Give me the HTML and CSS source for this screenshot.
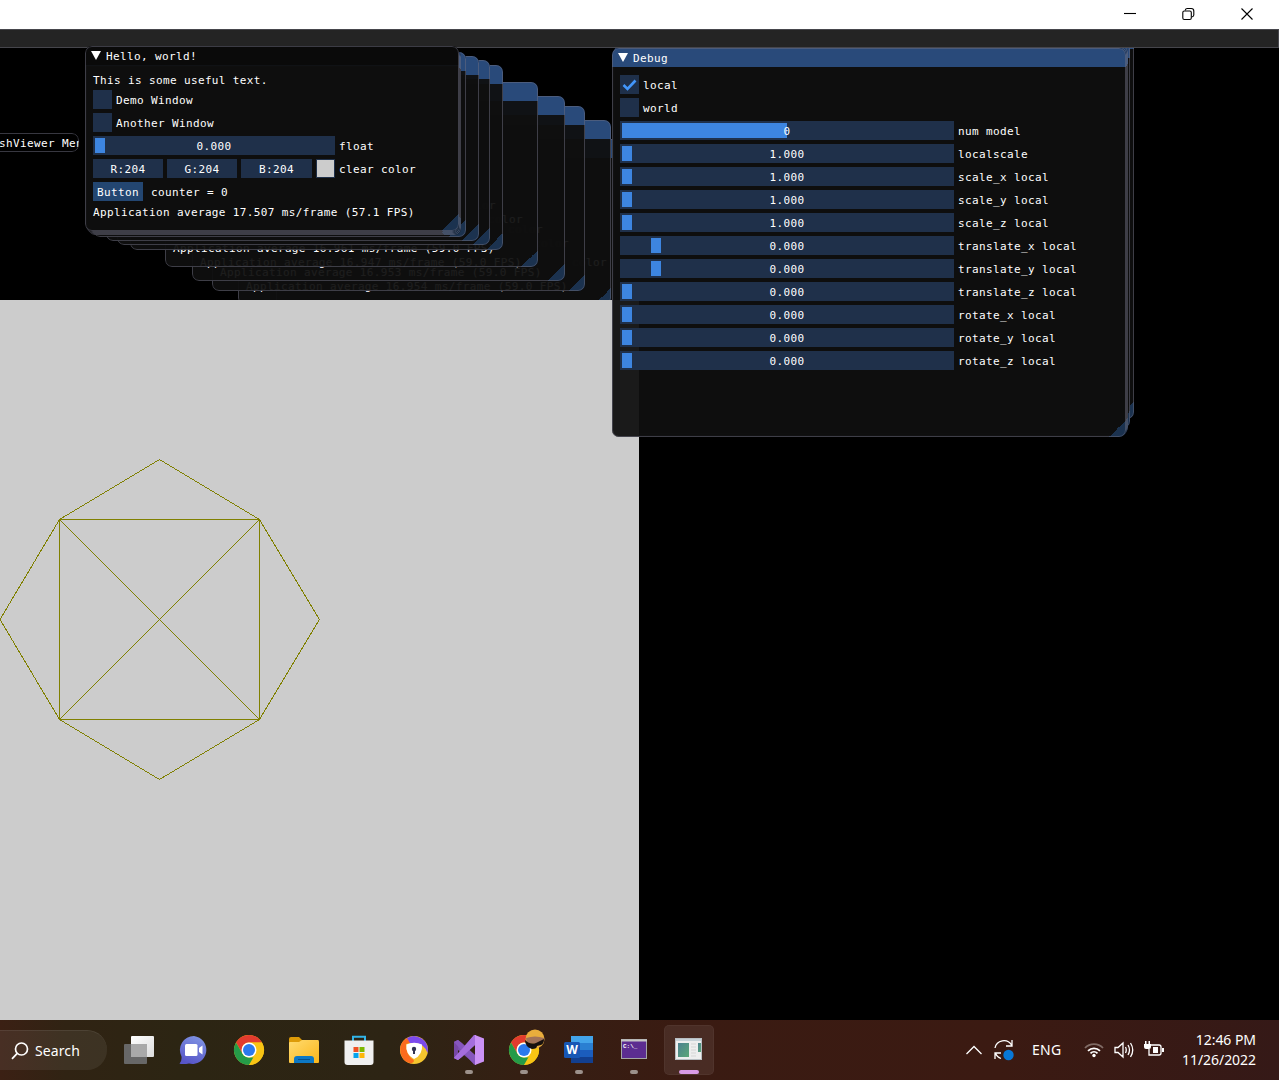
FILE: index.html
```html
<!DOCTYPE html>
<html lang="en">
<head>
<meta charset="utf-8">
<title>MeshViewer</title>
<link rel="stylesheet" href="styles.css">
</head>
<body>
<div class="screen">
  <header class="titlebar">
    <svg class="caption" viewBox="0 0 14 14"><path d="M1 6.500H13"/></svg>
    <svg class="caption" viewBox="0 0 14 14"><rect x=".8" y="4" width="8.500" height="8.500" rx="1.500"/><path d="M3.300 3.500V3.200Q3.600 1.500 5.300 1.500H9.300Q11.800 1.500 11.800 4V8Q11.800 9.500 9.800 10"/></svg>
    <svg class="caption" viewBox="0 0 14 14"><path d="M1.500 1.500L12.500 12.500M12.500 1.500L1.500 12.500"/></svg>
  </header>
  <div class="menubar"></div>

  <main class="desktop">
    <section class="win collapsed"><div class="title">MeshViewer Menu</div></section>

    <section class="win trail" style="left:276px;top:91px"><div class="title"></div><div class="body"><div class="row tint">clear color</div></div></section>
    <section class="win trail" style="left:238px;top:72px"><div class="title"></div><div class="body"><div class="row tint">clear color</div><div class="line stat">Application average 16.954 ms/frame (59.0 FPS)</div></div><i class="grip"></i></section>
    <section class="win trail" style="left:212px;top:58px"><div class="title"></div><div class="body"><div class="row tint">clear color</div><div class="line stat">Application average 16.953 ms/frame (59.0 FPS)</div></div><i class="grip"></i></section>
    <section class="win trail" style="left:192px;top:48px"><div class="title"></div><div class="body"><div class="row tint">clear color</div><div class="line stat">Application average 16.947 ms/frame (59.0 FPS)</div></div><i class="grip"></i></section>
    <section class="win trail" style="left:165px;top:34px"><div class="title"></div><div class="body"><div class="row tint">clear color</div><div class="line stat">Application average 16.961 ms/frame (59.0 FPS)</div></div><i class="grip"></i></section>
    <section class="win trail" style="left:130px;top:17px"><div class="title"></div><i class="grip"></i></section>
    <section class="win trail" style="left:117px;top:12px"><div class="title"></div><i class="grip"></i></section>
    <section class="win trail" style="left:106px;top:8px"><div class="title"></div><i class="grip"></i></section>
    <section class="win trail" style="left:93px;top:4px"><div class="title"></div><i class="grip"></i></section>
    <section class="win trail" style="left:88px;top:2px"><div class="title"></div><i class="grip"></i></section>
    <section class="win trail" style="left:87px;top:1px"><div class="title"></div><i class="grip"></i></section>
    <section class="win trail" style="left:86px;top:0px"><div class="title"></div><i class="grip"></i></section>
    <section class="win trail" style="left:86px;top:-1px"><div class="title"></div><i class="grip"></i></section>

    <section class="win debug-trail" style="left:620px;top:-18px"><div class="title"></div><i class="grip"></i></section>
    <section class="win debug-trail" style="left:616px;top:-9px"><div class="title"></div><i class="grip"></i></section>
    <section class="win debug-trail" style="left:614px;top:-3px"><div class="title"></div><i class="grip"></i></section>
    <section class="win debug-trail" style="left:613px;top:-1px"><div class="title"></div><i class="grip"></i></section>

    <svg class="viewport" viewBox="0 0 639 720">
      <path d="M159.500 159.500L259.500 219.500L319.500 319.500L259.500 419.500L159.500 479.500L59.500 419.500L0 319.500L59.500 219.500ZM59.500 219.500H259.500V419.500H59.500ZM59.500 219.500L259.500 419.500M259.500 219.500L59.500 419.500"/>
    </svg>

    <section class="win hello">
      <div class="title"><i class="arrow"></i>Hello, world!</div>
      <div class="body">
        <div class="line">This is some useful text.</div>
        <div class="row"><i class="box"></i>Demo Window</div>
        <div class="row"><i class="box"></i>Another Window</div>
        <div class="row"><div class="slider"><i class="grab"></i>0.000</div>float</div>
        <div class="row"><div class="field">R:204</div><div class="field">G:204</div><div class="field wide">B:204</div><i class="swatch"></i>clear color</div>
        <div class="row spaced"><div class="button">Button</div>counter = 0</div>
        <div class="line">Application average 17.507 ms/frame (57.1 FPS)</div>
      </div>
      <i class="grip"></i>
    </section>

    <section class="win debug">
      <div class="title"><i class="arrow"></i>Debug</div>
      <div class="body">
        <div class="row"><i class="box"><svg viewBox="0 0 19 19"><path d="M3.500 10L7.500 14L15.500 5.500"/></svg></i>local</div>
        <div class="row"><i class="box"></i>world</div>
        <div class="row"><div class="slider"><i class="grab" style="width:165px"></i>0</div>num model</div>
        <div class="row"><div class="slider"><i class="grab"></i>1.000</div>localscale</div>
        <div class="row"><div class="slider"><i class="grab"></i>1.000</div>scale_x local</div>
        <div class="row"><div class="slider"><i class="grab"></i>1.000</div>scale_y local</div>
        <div class="row"><div class="slider"><i class="grab"></i>1.000</div>scale_z local</div>
        <div class="row"><div class="slider"><i class="grab" style="left:31px"></i>0.000</div>translate_x local</div>
        <div class="row"><div class="slider"><i class="grab" style="left:31px"></i>0.000</div>translate_y local</div>
        <div class="row"><div class="slider"><i class="grab"></i>0.000</div>translate_z local</div>
        <div class="row"><div class="slider"><i class="grab"></i>0.000</div>rotate_x local</div>
        <div class="row"><div class="slider"><i class="grab"></i>0.000</div>rotate_y local</div>
        <div class="row"><div class="slider"><i class="grab"></i>0.000</div>rotate_z local</div>
      </div>
      <i class="grip"></i>
    </section>
  </main>

  <footer class="taskbar">
    <div class="search">
      <svg viewBox="0 0 18 18"><circle cx="10.500" cy="7" r="6"/><path d="M6.200 11.300L1 16.800"/></svg>
      <span>Search</span>
    </div>
    <nav class="apps">
      <div class="app"><svg viewBox="0 0 32 32"><defs><linearGradient id="tv" x2="1" y2="1"><stop stop-color="#fff"/><stop offset="1" stop-color="#dcdcdc"/></linearGradient></defs><rect x="1" y="10" width="23" height="20" rx="1" fill="#676767"/><rect x="8" y="2" width="23" height="21" rx="1" fill="url(#tv)"/><path d="M8 10H24V23H8Z" fill="#a9a9a9"/></svg></div>
      <div class="app"><svg viewBox="0 0 32 32"><defs><linearGradient id="ch" x1=".8" y1="0" x2=".4" y2="1"><stop stop-color="#8095e4"/><stop offset="1" stop-color="#5755c8"/></linearGradient></defs><path d="M16 2A14 14 0 1 1 11 29.500Q6 30.500 1.500 29.800Q4 27 3.500 22.500A14 14 0 0 1 16 2Z" fill="url(#ch)"/><rect x="7" y="10" width="12.500" height="12" rx="1.500" fill="#fff"/><path d="M21 14L24.500 11.500V20.500L21 18Z" fill="#fff"/></svg></div>
      <div class="app"><svg viewBox="0 0 32 32"><g id="chrome"><circle cx="16" cy="16" r="15" fill="#f8c414"/><path d="M3 8.500A15 15 0 0 1 29 8.500H16A7.500 7.500 0 0 0 9.500 12.300L9.500 19.800Z" fill="#e23b2e"/><path d="M3 8.500L9.500 19.700A7.500 7.500 0 0 0 16 23.500H22.500L16 31A15 15 0 0 1 3 8.500Z" fill="#259b48"/><path d="M22.500 19.700L16 31A15 15 0 0 0 29 8.500H16A7.500 7.500 0 0 1 22.500 19.700Z" fill="#f8c414"/><circle cx="16" cy="16" r="7.500" fill="#fff"/><circle cx="16" cy="16" r="6" fill="#2c79ed"/></g></svg></div>
      <div class="app"><svg viewBox="0 0 32 32"><defs><linearGradient id="fo" x2="1" y2="1"><stop stop-color="#ffdb70"/><stop offset="1" stop-color="#fbb61a"/></linearGradient></defs><path d="M1 5Q1 3 3 3H11L14 6V10H1Z" fill="#dd9b08"/><path d="M1 9Q1 8 2 8H11L14 6H30Q31 6 31 8V28Q31 29 30 29H2Q1 29 1 28Z" fill="url(#fo)"/><path d="M6 29V25Q6 22 9 22H23Q26 22 26 25V29Z" fill="#0d78c5"/><path d="M10 25.500H22" stroke="#07518e"/></svg></div>
      <div class="app"><svg viewBox="0 0 32 32"><path d="M10 7V2.700H22V7" fill="none" stroke="#32b5e8" stroke-width="2"/><path d="M1.500 6.500H30.500V28Q30.500 31 27.500 31H4.500Q1.500 31 1.500 28Z" fill="#f0f0f0"/><path d="M10.500 13H15.500V18H10.500Z" fill="#ef5124"/><path d="M16.500 13H21.500V18H16.500Z" fill="#7db800"/><path d="M10.500 19H15.500V24H10.500Z" fill="#05a2ed"/><path d="M16.500 19H21.500V24H16.500Z" fill="#fdb709"/></svg></div>
      <div class="app"><svg viewBox="0 0 32 32"><circle cx="16" cy="16" r="14" fill="#f5c52e"/><path d="M8 4.500A14 14 0 0 1 29.500 19Q26 9 16 9H10Z" fill="#7b49ec"/><path d="M9 4A14 14 0 0 0 13 29.600Q19 27 13 24Q8 19 8 10L12 9Z" fill="#fb6b1d"/><path d="M8.500 10.500Q16 7 24 10.500Q25 21 16 25Q7 20 8.500 10.500Z" fill="#fff"/><circle cx="16" cy="15" r="2.200" fill="#303351"/><path d="M15 15H17V20H15Z" fill="#303351"/></svg></div>
      <div class="app"><svg viewBox="0 0 32 32"><path d="M1 8L5 6L9 9L23 22V31L5 16Z" fill="#7b50ad"/><path d="M1 8L5 6V26L1 24Z" fill="#7747a6"/><path d="M5 26L1 24L21 1L23 1V10Z" fill="#a56ddc"/><path d="M5 6L23 22V31L21 30.500L1 8Z" fill="#8656bd"/><path d="M5 26L9 23L23 10V1L21 1.500L1 24Z" fill="#a56ddc"/><path d="M22 1L31 4.500V27.500L22 31Z" fill="#cb91f5"/></svg><b></b></div>
      <div class="app"><svg viewBox="0 0 32 32"><use href="#chrome"/></svg><svg class="avatar" viewBox="0 0 20 20"><circle cx="10" cy="10" r="9.500" fill="#e9ad3c"/><path d="M1 9Q10 6 19 9V12Q18 15 13 15L2 14Z" fill="#a37358"/><path d="M0 11Q5 16 11 14L19 10Q19 15 16 16L12 17Q12 20 7 20Q0 18 0 11Z" fill="#17110f"/></svg><b></b></div>
      <div class="app"><svg viewBox="0 0 32 32"><path d="M8 2H30V9H8Z" fill="#43a4ea"/><path d="M8 9H30V16H8Z" fill="#2a7fd2"/><path d="M8 16H30V23H8Z" fill="#1b5dbd"/><path d="M8 23H30V29H8Z" fill="#123f8f"/><rect x="1" y="8" width="16" height="16" rx="1.500" fill="#1757b5"/><text x="9" y="20" text-anchor="middle" class="word">W</text></svg><b></b></div>
      <div class="app"><svg viewBox="0 0 32 32"><rect x="3.500" y="5.500" width="25" height="19" fill="#5c2d91" stroke="#a5a5a5"/><path d="M3 6.500H29" stroke="#c6c6c6" stroke-width="2"/><text x="5" y="14" class="prompt">C:\_</text></svg><b></b></div>
      <div class="app active"><svg viewBox="0 0 32 32"><defs><linearGradient id="ap" x2="1" y2="1"><stop stop-color="#4c8190"/><stop offset="1" stop-color="#5ba777"/></linearGradient></defs><rect x="2.500" y="4.500" width="26" height="21" fill="#eee" stroke="#b8bec2"/><path d="M3 6H28" stroke="#c6d1d7" stroke-width="2"/><rect x="5" y="9" width="11" height="14" fill="url(#ap)"/><path d="M18 10H23M18 13H23M18 16H23M18 19H23M18 22H23" stroke="#d5d5d5"/><rect x="25" y="9" width="3" height="9" fill="url(#ap)"/></svg><b></b></div>
    </nav>
    <div class="tray">
      <svg class="chev" viewBox="0 0 16 10"><path d="M.5 9L8 1.500L15.500 9"/></svg>
      <svg class="sync" viewBox="0 0 22 22"><path d="M2 9A9 9 0 0 1 18.500 6M19 1V7H13M8 19.500A9 9 0 0 1 2.500 14.500M2 20V14H8"/><circle cx="15.500" cy="16" r="5.200"/></svg>
      <span class="lang">ENG</span>
      <svg class="wifi" viewBox="0 0 20 16"><path class="dim" d="M1 6A12.500 12.500 0 0 1 19 6"/><path d="M4 8.800A8.500 8.500 0 0 1 16 8.800M6.500 11.300A5 5 0 0 1 13.500 11.300"/><circle cx="10" cy="13.500" r="1.700"/></svg>
      <svg class="sound" viewBox="0 0 20 18"><path d="M1 6.500H4L9 2V16L4 11.500H1ZM11.500 6Q13 9 11.500 12M14 4Q17 9 14 14M16.500 2Q21 9 16.500 16"/></svg>
      <svg class="power" viewBox="0 0 20 18"><path d="M7 4H15Q17 4 17 6V12Q17 14 15 14H5V8"/><path class="fill" d="M9 6H14V12H9ZM0 3H7V6Q7 8 5 8H2Q0 8 0 6ZM1 0H2.500V3H1ZM4.500 0H6V3H4.500ZM18 7H20V11H18Z"/></svg>
      <div class="clock"><span>12:46 PM</span><span>11/26/2022</span></div>
    </div>
  </footer>
</div>
</body>
</html>
```
FILE: styles.css
```css
* { box-sizing: border-box; }
body { margin: 0; background: #000; overflow: hidden; }
.screen { width: 1279px; height: 1080px; display: flex; flex-direction: column; overflow: hidden; }

.titlebar { height: 29px; background: #fff; display: flex; justify-content: flex-end; gap: 44.5px; padding: 7px 25px 0 0; flex: none; }
.caption { width: 14px; height: 14px; fill: none; stroke: #000; stroke-width: 1.1; }
.menubar { height: 19px; flex: none; background: #242424; border: 1px solid #46464c; border-left: 0; position: relative; z-index: 2; }

.desktop { flex: 1; position: relative; background: #000; font: 11px/21px "DejaVu Sans Mono", monospace; letter-spacing: .37px; color: #fff; white-space: nowrap; }
.win { position: absolute; border-radius: 7px; overflow: hidden; background: rgba(15,15,15,.94); }
.win::after { content: ""; position: absolute; inset: 0; border: 1px solid rgba(110,110,128,.5); border-radius: 7px; pointer-events: none; }
.title { height: 19px; background: #294a7a; display: flex; align-items: flex-start; padding-left: 6px; }
.body { padding: 8px; display: flex; flex-direction: column; gap: 4px; }
.trail, .hello { width: 373px; height: 185px; }
.trail { z-index: 0; }
.hello { left: 85px; top: -2px; width: 374px; z-index: 3; }
.hello .title { background: #0a0a0a; }
.debug, .debug-trail { width: 514px; height: 389px; }
.debug { left: 612px; top: 0; z-index: 3; }
.collapsed { left: -44px; top: 85px; width: 123px; height: 19px; }
.collapsed .title { background: #000; padding-left: 29px; }
.arrow { border: 5px solid transparent; border-top: 9px solid #fff; border-bottom: 0; margin: 5px 5px 0 0; }
.line { height: 13px; line-height: 15px; flex: none; }
.row { height: 19px; display: flex; align-items: flex-start; gap: 4px; flex: none; }
.tint { margin: 86px 0 0 246px; }
.stat { margin-top: 23px; }
.spaced { gap: 8px; }
.box { width: 19px; height: 19px; background: #1f304a; }
.box svg { display: block; fill: none; stroke: #4296fa; stroke-width: 2.6; }
.slider { position: relative; z-index: 0; width: 242px; height: 19px; background: #1f304a; text-align: center; }
.debug .slider { width: 334px; }
.grab { position: absolute; left: 2px; top: 2px; width: 10px; height: 15px; background: #3d85e0; z-index: -1; }
.field { width: 70px; height: 19px; background: #1f304a; text-align: center; }
.wide { width: 71px; }
.swatch { width: 19px; height: 19px; background: #ccc; border: 1px solid #1f304a; }
.button { width: 50px; height: 19px; background: #234671; text-align: center; }
.grip { position: absolute; right: 0; bottom: 0; width: 17px; height: 17px; background: linear-gradient(135deg, transparent 50%, #1b324f 50%); }
.viewport { position: absolute; left: 0; top: 252px; width: 639px; height: 720px; background: #ccc; fill: none; stroke: #808000; shape-rendering: crispEdges; z-index: 1; }

.taskbar { height: 60px; flex: none; position: relative; z-index: 4; display: flex; align-items: center; color: #fff; font: 14px/20px "Noto Sans", sans-serif; background: linear-gradient(90deg, #3b2014 0, #302313 65px, #2c2513 180px, #2d2414 390px, #351f13 520px, #3a1b12 680px, #3b1a12 1000px, #351917 1279px); }
.search { width: 107px; height: 40px; border-radius: 0 20px 20px 0; background: rgba(255,255,255,.07); border-top: 1px solid rgba(255,255,255,.08); display: flex; align-items: center; gap: 6px; padding-left: 11px; }
.search svg { width: 18px; height: 18px; fill: none; stroke: #fff; stroke-width: 1.7; }
.search span { letter-spacing: .1px; }
.apps { display: flex; gap: 5px; margin-left: 7px; }
.app { width: 50px; height: 50px; position: relative; display: flex; align-items: center; justify-content: center; }
.app svg { width: 32px; height: 32px; }
.app b { position: absolute; bottom: 1px; left: 21px; width: 8px; height: 4px; border-radius: 2px; background: #9c918b; }
.active { background: rgba(255,255,255,.08); border-radius: 5px; box-shadow: inset 0 0 0 1px rgba(255,255,255,.04); }
.app.active b { width: 20px; left: 15px; background: #d99ae5; }
.app .avatar { position: absolute; width: 20px; height: 20px; left: 26px; top: 4px; }
.word { font: bold 12px "Open Sans", sans-serif; fill: #fff; }
.prompt { font: bold 6px "Liberation Mono", monospace; fill: #fff; }
.tray { flex: 1; display: flex; align-items: center; justify-content: flex-end; padding-right: 23px; }
.tray svg { fill: none; stroke: #fff; stroke-width: 1.3; flex: none; }
.chev { width: 16px; height: 10px; }
.sync { width: 22px; height: 22px; margin-left: 11px; }
.sync circle { fill: #0878d7; stroke: none; }
.lang { margin-left: 17px; width: 30px; letter-spacing: .3px; }
.wifi { width: 20px; height: 16px; margin-left: 22px; }
.tray .wifi { stroke-width: 1.8; }
.wifi .dim { stroke: #806b65; }
.wifi circle { fill: #fff; stroke: none; }
.sound { width: 20px; height: 18px; margin-left: 10px; }
.power { width: 20px; height: 18px; margin-left: 10px; }
.tray .power .fill { fill: #fff; stroke: none; }
.clock { display: flex; flex-direction: column; text-align: right; margin-left: 18px; letter-spacing: -.05px; }
```
